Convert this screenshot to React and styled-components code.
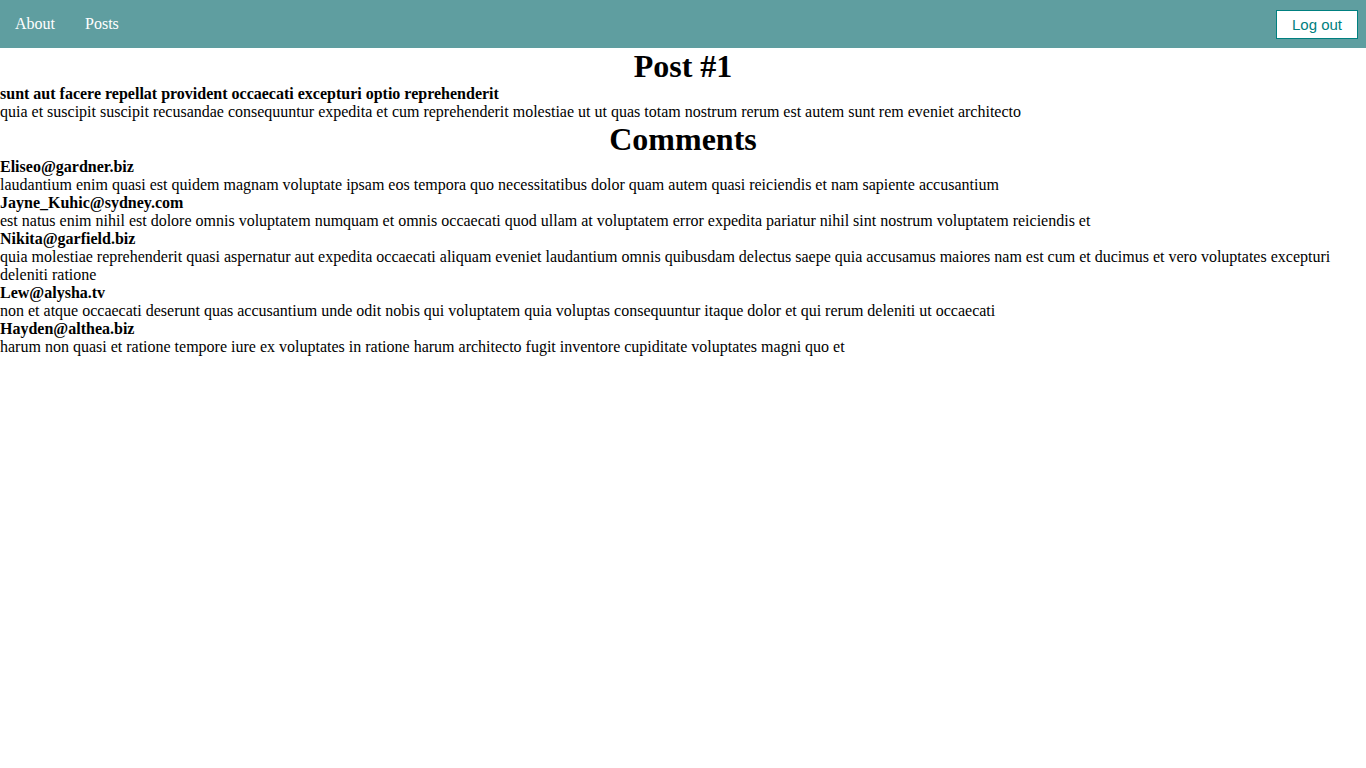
import React from 'react'
import styled, { createGlobalStyle } from 'styled-components'

const GlobalStyle = createGlobalStyle`
  body {
    margin: 0;
    font-family: 'Liberation Serif', 'Times New Roman', serif;
    font-size: 16px;
    color: #000;
    background: #fff;
  }
`

const NavBar = styled.nav`
  height: 48px;
  background: #5f9ea0;
  display: flex;
  align-items: center;
  justify-content: space-between;
  padding: 0 8px 0 15px;
`

const NavLinks = styled.div`
  display: flex;
  gap: 30px;
`

const NavLink = styled.a`
  color: #fff;
  text-decoration: none;
  font-size: 16px;
  cursor: pointer;
`

const LogoutButton = styled.button`
  font-family: 'Liberation Sans', Arial, sans-serif;
  font-size: 15px;
  color: #008080;
  background: #fff;
  border: 1px solid #008080;
  padding: 5px 15px;
  line-height: 17px;
  cursor: pointer;
`

const Title = styled.h1`
  margin: 0;
  text-align: center;
  font-size: 32px;
  line-height: 37px;
`

const Item = styled.div`
  line-height: 18px;
`

const ItemTitle = styled.div`
  font-weight: bold;
`

const post = {
  id: 1,
  title: 'sunt aut facere repellat provident occaecati excepturi optio reprehenderit',
  body: 'quia et suscipit suscipit recusandae consequuntur expedita et cum reprehenderit molestiae ut ut quas totam nostrum rerum est autem sunt rem eveniet architecto',
}

const comments = [
  { email: 'Eliseo@gardner.biz', body: 'laudantium enim quasi est quidem magnam voluptate ipsam eos tempora quo necessitatibus dolor quam autem quasi reiciendis et nam sapiente accusantium' },
  { email: 'Jayne_Kuhic@sydney.com', body: 'est natus enim nihil est dolore omnis voluptatem numquam et omnis occaecati quod ullam at voluptatem error expedita pariatur nihil sint nostrum voluptatem reiciendis et' },
  { email: 'Nikita@garfield.biz', body: 'quia molestiae reprehenderit quasi aspernatur aut expedita occaecati aliquam eveniet laudantium omnis quibusdam delectus saepe quia accusamus maiores nam est cum et ducimus et vero voluptates excepturi deleniti ratione' },
  { email: 'Lew@alysha.tv', body: 'non et atque occaecati deserunt quas accusantium unde odit nobis qui voluptatem quia voluptas consequuntur itaque dolor et qui rerum deleniti ut occaecati' },
  { email: 'Hayden@althea.biz', body: 'harum non quasi et ratione tempore iure ex voluptates in ratione harum architecto fugit inventore cupiditate voluptates magni quo et' },
]

export default function App() {
  return (
    <>
      <GlobalStyle />
      <NavBar>
        <NavLinks>
          <NavLink>About</NavLink>
          <NavLink>Posts</NavLink>
        </NavLinks>
        <LogoutButton>Log out</LogoutButton>
      </NavBar>
      <Title>Post #{post.id}</Title>
      <Item>
        <ItemTitle>{post.title}</ItemTitle>
        <div>{post.body}</div>
      </Item>
      <Title>Comments</Title>
      {comments.map((c) => (
        <Item key={c.email}>
          <ItemTitle>{c.email}</ItemTitle>
          <div>{c.body}</div>
        </Item>
      ))}
    </>
  )
}
